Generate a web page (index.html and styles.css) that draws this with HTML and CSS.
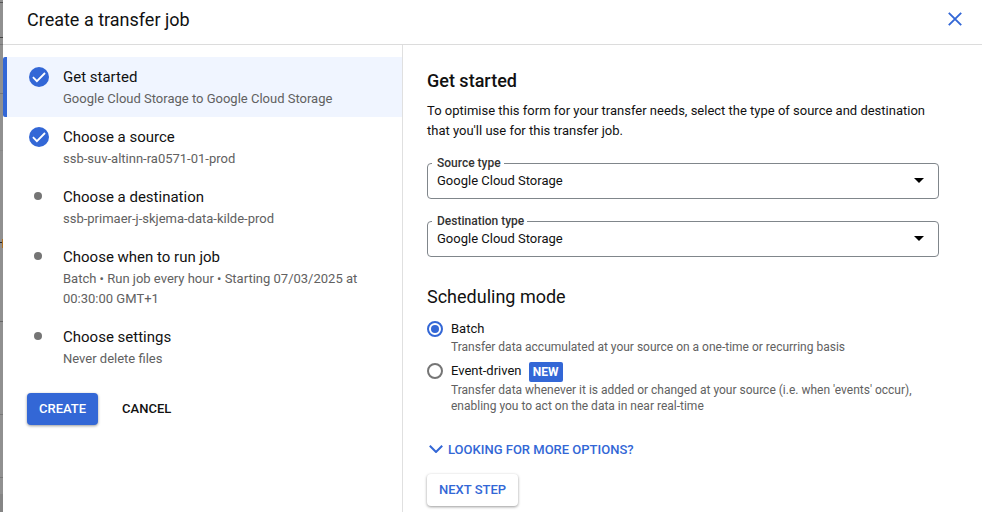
FILE: index.html
```
<!DOCTYPE html>
<html lang="en-GB">
<head>
<meta charset="utf-8">
<title>Create a transfer job</title>
<link rel="stylesheet" href="styles.css">
</head>
<body>
<div class="backdrop"></div>
<section class="panel">
  <header class="panel-header">
    <h1>Create a transfer job</h1>
    <svg class="close" viewBox="0 0 14 14"><path d="M.8.8 13.2 13.2M13.2.8.8 13.2"/></svg>
  </header>
  <div class="panel-body">
    <nav class="stepper">
      <div class="step active">
        <svg class="done" viewBox="0 0 20 20"><circle cx="10" cy="10" r="10"/><path d="M3.9 10.2 7.9 14.2 16 6"/></svg>
        <div><h2>Get started</h2><p>Google Cloud Storage to Google Cloud Storage</p></div>
      </div>
      <div class="step">
        <svg class="done" viewBox="0 0 20 20"><circle cx="10" cy="10" r="10"/><path d="M3.9 10.2 7.9 14.2 16 6"/></svg>
        <div><h2>Choose a source</h2><p>ssb-suv-altinn-ra0571-01-prod</p></div>
      </div>
      <div class="step">
        <span class="dot"></span>
        <div><h2>Choose a destination</h2><p>ssb-primaer-j-skjema-data-kilde-prod</p></div>
      </div>
      <div class="step">
        <span class="dot"></span>
        <div><h2>Choose when to run job</h2><p>Batch • Run job every hour • Starting 07/03/2025 at<br>00:30:00 GMT+1</p></div>
      </div>
      <div class="step">
        <span class="dot"></span>
        <div><h2>Choose settings</h2><p>Never delete files</p></div>
      </div>
      <div class="actions">
        <button class="btn primary">CREATE</button>
        <button class="btn plain">CANCEL</button>
      </div>
    </nav>
    <main class="content">
      <h2 class="title">Get started</h2>
      <p class="intro">To optimise this form for your transfer needs, select the type of source and destination<br>that you'll use for this transfer job.</p>
      <div class="field">
        <span class="label">Source type</span>
        <span>Google Cloud Storage</span>
        <svg class="caret" viewBox="0 0 10 5"><path d="M0 0H10L5 5Z"/></svg>
      </div>
      <div class="field">
        <span class="label">Destination type</span>
        <span>Google Cloud Storage</span>
        <svg class="caret" viewBox="0 0 10 5"><path d="M0 0H10L5 5Z"/></svg>
      </div>
      <h3 class="subtitle">Scheduling mode</h3>
      <div class="option">
        <span class="radio checked"></span>
        <div><div class="option-name">Batch</div><p>Transfer data accumulated at your source on a one-time or recurring basis</p></div>
      </div>
      <div class="option event">
        <span class="radio"></span>
        <div><div class="option-name">Event-driven<span class="badge">NEW</span></div><p>Transfer data whenever it is added or changed at your source (i.e. when 'events' occur),<br>enabling you to act on the data in near real-time</p></div>
      </div>
      <div class="more"><svg viewBox="0 0 14 8"><path d="M.8.8 7 7 13.2.8"/></svg>LOOKING FOR MORE OPTIONS?</div>
      <button class="btn next">NEXT STEP</button>
    </main>
  </div>
</section>
</body>
</html>
```
FILE: styles.css
```
* { box-sizing: border-box; margin: 0; padding: 0; }
body {
  display: flex;
  width: 982px;
  height: 512px;
  overflow: hidden;
  background: #fff;
  color: #111;
  font: 13px/20px Roboto, sans-serif;
}
h1, h2, h3 { font-weight: 400; }
.backdrop {
  width: 3px;
  background: linear-gradient(#555, #555) 0 2px / 3px 1px,
    linear-gradient(#444, #444) 0 37px / 3px 1px,
    linear-gradient(#777, #777) 0 44px / 3px 1px,
    linear-gradient(#777, #777) 0 93px / 3px 1px,
    linear-gradient(#888, #888) 0 150px / 3px 1px,
    linear-gradient(#222, #222) 0 242px / 2px 1px,
    linear-gradient(#b07020, #b07020) 2px 239px / 1px 9px,
    linear-gradient(#666, #666) 0 321px / 3px 1px,
    linear-gradient(#777, #777) 0 414px / 3px 1px,
    linear-gradient(#777, #777) 0 477px / 3px 1px,
    linear-gradient(#858585, #858585) 0 494px / 3px 18px,
    #909090;
  background-repeat: no-repeat;
}
.panel { flex: 1; display: flex; flex-direction: column; }
.panel-header {
  display: flex;
  align-items: center;
  justify-content: space-between;
  height: 45px;
  padding: 0 20px 5px 24px;
  border-bottom: 1px solid #dcdcdc;
}
.panel-header h1 { font-size: 18px; line-height: 24px; }
.close { width: 14px; height: 14px; margin-bottom: 1px; fill: none; stroke: #3367d6; stroke-width: 1.9; }
.panel-body { flex: 1; display: flex; }
.stepper { width: 400px; padding-top: 12px; border-right: 1px solid #e0e0e0; }
.step {
  display: grid;
  grid-template-columns: 36px 1fr;
  min-height: 60px;
  padding: 10px 0 8px 24px;
}
.step.active {
  border-left: 4px solid #3367d6;
  border-radius: 2px 0 0 2px;
  padding-left: 20px;
  background: #f0f5ff;
}
.step h2 { font-size: 15px; line-height: 20px; margin-bottom: 2px; }
.step p { color: #616161; }
.done { width: 20px; height: 20px; margin-left: 2px; fill: #3367d6; }
.done path { fill: none; stroke: #fff; stroke-width: 1.8; }
.dot { width: 8px; height: 8px; margin: 5px 0 0 7px; border-radius: 50%; background: #757575; }
.actions { display: flex; gap: 12px; padding: 16px 0 0 24px; }
.btn {
  height: 32px;
  padding: 0 12px;
  border: 0;
  border-radius: 4px;
  background: #fff;
  color: #111;
  font: 500 13px/32px Roboto, sans-serif;
}
.btn.primary { background: #3367d6; color: #fff; box-shadow: 0 1px 3px rgba(0, 0, 0, .4); }
.btn.next { color: #3367d6; box-shadow: 0 1px 3px rgba(0, 0, 0, .4); }
.content { flex: 1; padding: 24px 43px 0 24px; }
.title { font-size: 18px; font-weight: 500; line-height: 24px; margin-bottom: 8px; }
.intro { margin-bottom: 22px; }
.field {
  position: relative;
  display: flex;
  justify-content: space-between;
  align-items: center;
  height: 36px;
  margin-bottom: 22px;
  padding: 0 14px 0 9px;
  border: 1px solid #80868b;
  border-radius: 4px;
}
.label {
  position: absolute;
  left: 4px;
  top: -9px;
  padding: 0 3px 0 5px;
  background: #fff;
  color: #333;
  font-size: 12px;
  font-weight: 500;
  line-height: 16px;
}
.caret { width: 10px; height: 5px; margin-bottom: 1px; fill: #000; }
.subtitle { margin-top: 28px; font-size: 18px; line-height: 24px; }
.option { display: grid; grid-template-columns: 24px 1fr; margin-top: 10px; }
.option p { color: #616161; font-size: 12px; line-height: 16px; }
.option.event { margin-top: 6px; }
.event .option-name { display: flex; height: 21px; }
.radio {
  display: grid;
  place-items: center;
  width: 16px;
  height: 16px;
  margin-top: 2px;
  border: 2px solid #757575;
  border-radius: 50%;
}
.radio.checked { border-color: #3367d6; }
.radio.checked::after { content: ""; width: 8px; height: 8px; border-radius: 50%; background: #3367d6; }
.badge {
  width: 34px;
  height: 20px;
  margin: 1px 0 0 7px;
  background: #3367d6;
  color: #fff;
  font-size: 12px;
  font-weight: 700;
  text-align: center;
  border-radius: 2px;
}
.more {
  display: flex;
  align-items: center;
  gap: 5px;
  margin: 26px 0 14px 2px;
  color: #3367d6;
  font-weight: 500;
}
.more svg { width: 14px; height: 8px; margin-bottom: 3px; fill: none; stroke: #3367d6; stroke-width: 2; }
```
